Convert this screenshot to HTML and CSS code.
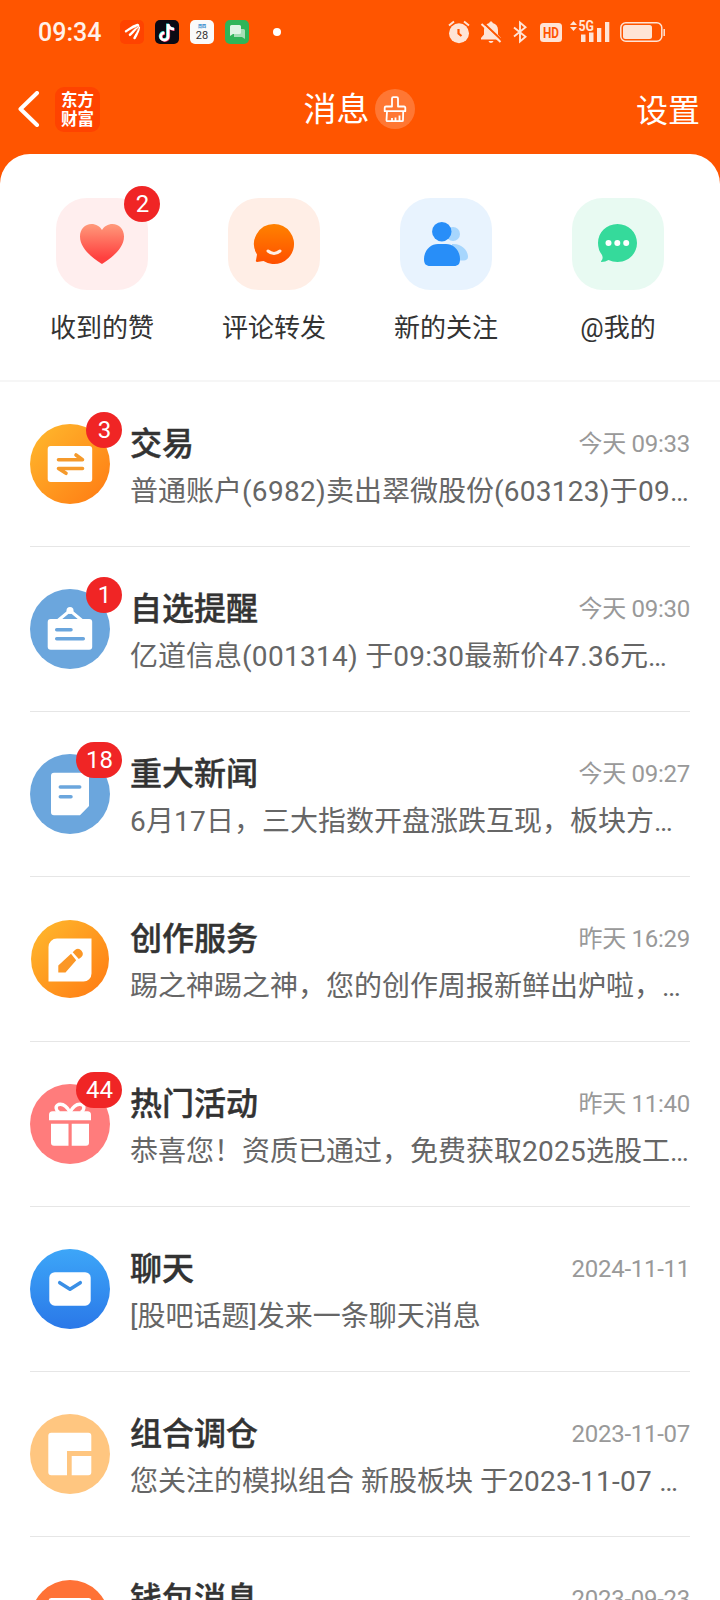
FILE: index.html
```html
<!DOCTYPE html>
<html lang="zh-CN">
<head>
<meta charset="utf-8">
<title>消息</title>
<link rel="stylesheet" href="styles.css">
</head>
<body>
<div class="screen">
  <div class="status">
    <span class="clock">09:34</span>
    <div class="status-apps">
      <svg class="app" viewBox="0 0 24 24"><rect width="24" height="24" rx="5" fill="#ff4300"/><g fill="none" stroke="#fff" stroke-linecap="round"><path d="M17.500 5C12 6.500 9 9.500 6 11.300" stroke-width="2.400"/><path d="M18 5.500C15 9 13 12.500 10 14.800" stroke-width="2.600"/><path d="M18.800 7.500C18.500 12 16 15 14.600 18" stroke-width="2.600"/></g><path d="M17.500 6.500C14 8.500 11.500 11.500 8 13M18.500 7.500c-1.500 4-3.500 6.500-5.700 9" stroke="#ff4300" stroke-width=".7" fill="none"/></svg>
      <svg class="app" viewBox="0 0 24 24"><rect width="24" height="24" rx="5" fill="#0b0a14"/><g fill="none" stroke-width="2.800"><path d="M12.500 3.500V16a3.700 3.700 0 1 1-3.700-3.700M12.500 4c.5 3 2.500 4.500 6 4.700" stroke="#2ee6e2"/><path d="M13.700 4.500V17a3.700 3.700 0 1 1-3.700-3.700M13.700 5c.5 3 2.500 4.500 6 4.700" stroke="#f6295a"/><path d="M13.100 4V16.500a3.700 3.700 0 1 1-3.700-3.700M13.100 4.500c.5 3 2.500 4.500 6 4.700" stroke="#fff"/></g></svg>
      <svg class="app" viewBox="0 0 24 24"><rect width="24" height="24" rx="5" fill="#fafafa"/><text class="cal-week" x="12" y="8.300" text-anchor="middle">周四</text><text class="cal-day" x="12" y="19" text-anchor="middle">28</text></svg>
      <svg class="app" viewBox="0 0 24 24"><rect width="24" height="24" rx="5" fill="#2fb558"/><path d="M9 9h9.500a1.500 1.500 0 0 1 1.500 1.500V19l-3-2H9z" fill="#a5dfb5"/><path d="M6.500 5h8A1.500 1.500 0 0 1 16 6.500v6a1.500 1.500 0 0 1-1.500 1.500H8l-3 2V6.500A1.500 1.500 0 0 1 6.500 5z" fill="#def4e3"/></svg>
    </div>
    <span class="dot"></span>
    <div class="status-sys">
      <svg class="s-alarm" viewBox="0 0 22 24"><circle cx="11" cy="13.200" r="10" fill="#ffe4d6"/><path d="M1 5.500L6 1.500M16 1.500l5 4" stroke="#ffe4d6" stroke-width="2"/><path d="M10.500 9v4.500l3 2.500" stroke="#ff5500" stroke-width="2.200" fill="none"/></svg>
      <svg class="s-bell" viewBox="0 0 22 24"><path d="M11 1.500c1 0 1.700.7 1.700 1.400 3.500.8 5.300 3.500 5.300 7v4.600L21 18v1.500H1V18l3-3.500V10c0-3.600 1.800-6.300 5.300-7.100 0-.7.700-1.400 1.700-1.400zM8.500 21h5c-.5 1.300-1.300 2-2.500 2s-2-.7-2.500-2z" fill="#ffe4d6"/><path d="M3.500 3L22 20.500" stroke="#ff5500" stroke-width="2.200"/><path d="M1.500 4L20.500 22" stroke="#ffe4d6" stroke-width="2"/></svg>
      <svg class="s-bt" viewBox="0 0 14 24"><path d="M1 7.500l11.500 9.300L7 21.500V2.500l5.500 4.800L1 16.500" stroke="#ffe4d6" stroke-width="1.900" fill="none"/></svg>
      <svg class="s-hd" viewBox="0 0 22 24"><rect y="3" width="22" height="19" rx="3.500" fill="#ffe4d6"/><text class="hd" x="11" y="17.700" text-anchor="middle" textLength="16" lengthAdjust="spacingAndGlyphs">HD</text></svg>
      <svg class="s-net" viewBox="0 0 40 24"><g fill="#ffe4d6"><path d="M0 5l3.500-4L7 5zM0 7h7l-3.500 4z"/><path d="M11 14.500h4.500V22H11zM19 12.500h4.500V22H19zM27 8h4.300v14H27zM35 2h4.300v20H35z"/></g><text class="net" x="8.500" y="11" textLength="15.500" lengthAdjust="spacingAndGlyphs">5G</text></svg>
      <svg class="s-bat" viewBox="0 0 45 24"><rect x=".8" y="2.800" width="41" height="18.400" rx="5" fill="none" stroke="#ffe4d6" stroke-width="1.500"/><rect x="3" y="5" width="29" height="14" rx="2.500" fill="#ffe4d6"/><path d="M44.200 9v7" stroke="#ffe4d6" stroke-width="1.500"/></svg>
    </div>
  </div>

  <header class="nav">
    <div class="nav-left">
      <svg class="back" viewBox="0 0 22 36"><path d="M19 2L2.500 18 19 34" fill="none" stroke="#fff" stroke-width="4" stroke-linecap="round" stroke-linejoin="round"/></svg>
      <div class="brand">东方<br>财富</div>
    </div>
    <div class="nav-title">
      <h1>消息</h1>
      <span class="clean"><svg viewBox="0 0 40 40"><g fill="none" stroke="#fff" stroke-width="1.800" stroke-linejoin="round"><path d="M17 17.500V9.500a1.300 1.300 0 0 1 1.300-1.300h3.400A1.300 1.300 0 0 1 23 9.500v8h6a1.300 1.300 0 0 1 1.300 1.300v3.400H9.700v-3.400a1.300 1.300 0 0 1 1.300-1.300z"/><path d="M12 22.500L11.500 31a1 1 0 0 0 1 1.200H27a1 1 0 0 0 1-1l.2-8.700"/><path d="M17 32v-3M20.500 32v-3.500M24.500 32v-5.500"/></g></svg></span>
    </div>
    <a class="nav-settings">设置</a>
  </header>

  <main class="sheet">
    <nav class="shortcuts">
      <div class="shortcut">
        <div class="tile pink"><svg viewBox="0 0 92 92"><defs><linearGradient id="heart" x2="0" y2="1"><stop stop-color="#ff9a7b"/><stop offset=".85" stop-color="#ff403f"/></linearGradient></defs><path d="M46 66C40 62 24 52 24 38.500 24 31 29 26 35.500 26c4.500 0 8.500 2.500 10.500 6 2-3.500 6-6 10.500-6C63 26 68 31 68 38.500 68 52 52 62 46 66z" fill="url(#heart)"/></svg><span class="badge">2</span></div>
        <span>收到的赞</span>
      </div>
      <div class="shortcut">
        <div class="tile peach"><svg viewBox="0 0 92 92"><defs><linearGradient id="smile" x2="0" y2="1"><stop stop-color="#ff8200"/><stop offset="1" stop-color="#ff4f00"/></linearGradient></defs><path d="M46 26a20 20 0 1 1-10.500 37L29 64c-1 0-1.500-1-1-1.800L29 56.500A20 20 0 0 1 46 26z" fill="url(#smile)"/><path d="M40 53q6 5 12 0" fill="none" stroke="#ffeee6" stroke-width="3" stroke-linecap="round"/></svg></div>
        <span>评论转发</span>
      </div>
      <div class="shortcut">
        <div class="tile sky"><svg viewBox="0 0 92 92"><g fill="#a7d6fd"><circle cx="53" cy="36" r="7"/><path d="M52 46c9-1 16 6 16 13 0 2-2 3.500-4 3.500H52z"/></g><g fill="#288ef8"><circle cx="41.800" cy="33.700" r="9.700"/><path d="M24 61c0-9 7-15 14-15h8c7 0 14 6 14 15 0 5-2 7-6 7H30c-4 0-6-2-6-7z"/></g></svg></div>
        <span>新的关注</span>
      </div>
      <div class="shortcut">
        <div class="tile mint"><svg viewBox="0 0 92 92"><path d="M45.500 26C56.500 26 65 34.500 65 45S56.500 64 45.500 64q-5 0-9-2-3 2-7 2-1 0 0-1.500 2-2 .5-5.500Q26 52 26 45c0-10.500 8.500-19 19.500-19z" fill="#35da9b"/><g fill="#fff"><circle cx="36.500" cy="45" r="3"/><circle cx="45.300" cy="45" r="3"/><circle cx="54.200" cy="45" r="3"/></g></svg></div>
        <span>@我的</span>
      </div>
    </nav>

    <section class="list">
      <article class="row">
        <div class="avatar"><svg viewBox="0 0 80 80"><defs><linearGradient id="amber" x2="1" y2="1"><stop offset=".1" stop-color="#ffb42b"/><stop offset=".9" stop-color="#ff8015"/></linearGradient></defs><circle cx="40" cy="40" r="40" fill="url(#amber)"/><rect x="17.700" y="22" width="44.500" height="36" rx="3" fill="#fff"/><path d="M28.500 35.700H52.500L46 31M52.500 44.500H28.500L36 49.300" fill="none" stroke="#f59a2c" stroke-width="3.600" stroke-linecap="round" stroke-linejoin="round"/></svg><span class="badge">3</span></div>
        <div class="text"><div class="line"><h2>交易</h2><time>今天 09:33</time></div><p>普通账户<span class="num">(6982)</span>卖出翠微股份<span class="num">(603123)</span>于<span class="num">09…</span></p></div>
      </article>
      <article class="row">
        <div class="avatar"><svg viewBox="0 0 80 80"><circle cx="40" cy="40" r="40" fill="#6ba6dd"/><rect x="17.700" y="30" width="44.500" height="30.700" rx="3" fill="#fff"/><path d="M28 31.500L40 21.500 52 31.500" fill="none" stroke="#fff" stroke-width="3"/><circle cx="40" cy="21.500" r="3.500" fill="#fff"/><path d="M26.700 40.800H41M26.700 49.700H53.300" stroke="#6ba6dd" stroke-width="3.500" stroke-linecap="round"/></svg><span class="badge">1</span></div>
        <div class="text"><div class="line"><h2>自选提醒</h2><time>今天 09:30</time></div><p>亿道信息<span class="num">(001314) </span>于<span class="num">09:30</span>最新价<span class="num">47.36</span>元…</p></div>
      </article>
      <article class="row">
        <div class="avatar"><svg viewBox="0 0 80 80"><circle cx="40" cy="40" r="40" fill="#6ba6dd"/><path d="M24 18.700H56a3 3 0 0 1 3 3V52L50 61.300H24a3 3 0 0 1-3-3V21.700a3 3 0 0 1 3-3z" fill="#fff"/><path d="M30.300 33H49.700M30.300 42.700H41" stroke="#6ba6dd" stroke-width="3.500" stroke-linecap="round"/></svg><span class="badge">18</span></div>
        <div class="text"><div class="line"><h2>重大新闻</h2><time>今天 09:27</time></div><p><span class="num">6</span>月<span class="num">17</span>日，三大指数开盘涨跌互现，板块方…</p></div>
      </article>
      <article class="row">
        <div class="avatar"><svg viewBox="0 0 80 80"><circle cx="40" cy="40" r="39" fill="url(#amber)"/><path d="M27 19.500H61.500V54.500a8 8 0 0 1-8 8H18.500V28a8.500 8.500 0 0 1 8.500-8.500z" fill="#fff"/><path d="M28.300 53.400V46.500L41 34.800 46.200 41.200 35.500 53.400zM42.700 33.300L45 31a4.800 4.800 0 0 1 6.200 7.300L48.800 40z" fill="#fb9726"/></svg></div>
        <div class="text"><div class="line"><h2>创作服务</h2><time>昨天 16:29</time></div><p>踢之神踢之神，您的创作周报新鲜出炉啦，…</p></div>
      </article>
      <article class="row">
        <div class="avatar"><svg viewBox="0 0 80 80"><circle cx="40" cy="40" r="40" fill="#ff7c7c"/><g fill="none" stroke="#fff" stroke-width="3.400"><path d="M40 28C36 21 32 19.500 28.500 20.500 25 22 25.500 26 29 28.500M40 28C44 21 48 19.500 51.500 20.500 55 22 54.500 26 51 28.500"/></g><g fill="#fff"><path d="M22.500 27.300h35a3.500 3.500 0 0 1 3.500 3.500v5.500H19v-5.500a3.500 3.500 0 0 1 3.500-3.500z"/><path d="M21 39.800H38.500V61.700H24a3 3 0 0 1-3-3zM41.700 39.800H59V58.700a3 3 0 0 1-3 3H41.700z"/></g></svg><span class="badge">44</span></div>
        <div class="text"><div class="line"><h2>热门活动</h2><time>昨天 11:40</time></div><p>恭喜您！资质已通过，免费获取<span class="num">2025</span>选股工…</p></div>
      </article>
      <article class="row">
        <div class="avatar"><svg viewBox="0 0 80 80"><defs><linearGradient id="azure" x2="0" y2="1"><stop stop-color="#3da6f8"/><stop offset="1" stop-color="#2a78e8"/></linearGradient></defs><circle cx="40" cy="40" r="40" fill="url(#azure)"/><rect x="19.300" y="23.200" width="41.400" height="33.500" rx="5.500" fill="#fff"/><path d="M29.700 33.700L40 40.200 50.300 33.700" fill="none" stroke="#3a8fe6" stroke-width="3.500" stroke-linecap="round" stroke-linejoin="round"/></svg></div>
        <div class="text"><div class="line"><h2>聊天</h2><time>2024-11-11</time></div><p>[股吧话题]发来一条聊天消息</p></div>
      </article>
      <article class="row">
        <div class="avatar"><svg viewBox="0 0 80 80"><circle cx="40" cy="40" r="40" fill="#ffc680"/><path d="M21.300 18.700h37a3 3 0 0 1 3 3V37H37V61.300H21.300a3 3 0 0 1-3-3V21.700a3 3 0 0 1 3-3zM41.700 42H61.300V58.300a3 3 0 0 1-3 3H41.700z" fill="#fff"/></svg></div>
        <div class="text"><div class="line"><h2>组合调仓</h2><time>2023-11-07</time></div><p>您关注的模拟组合 新股板块 于<span class="num">2023-11-07 …</span></p></div>
      </article>
      <article class="row">
        <div class="avatar"><svg viewBox="0 0 80 80"><circle cx="40" cy="40" r="39" fill="#ff7236"/><rect x="18.500" y="19" width="43" height="40" rx="3" fill="#fff"/></svg></div>
        <div class="text"><div class="line"><h2>钱包消息</h2><time>2023-09-23</time></div></div>
      </article>
    </section>
  </main>
</div>
</body>
</html>
```
FILE: styles.css
```css
* { box-sizing: border-box; margin: 0; padding: 0; }
body { background: #ff5500; font-family: Roboto, "Noto Sans CJK SC", sans-serif; color: #333; }
.screen { width: 720px; height: 1600px; overflow: hidden; display: flex; flex-direction: column; }
svg { display: block; flex: none; }

.status { height: 64px; flex: none; display: flex; align-items: center; padding: 0 55px 0 38px; }
.clock { width: 82px; font-size: 25px; font-weight: 500; line-height: 34px; padding-top: 2px; color: #fff1e9; }
.status-apps { display: flex; gap: 11px; }
.app { width: 24px; height: 24px; }
.cal-week { font-size: 4px; font-weight: 700; fill: #1683c9; }
.cal-day { font-size: 11px; fill: #333; }
.dot { width: 8px; height: 8px; border-radius: 50%; background: #fff; margin-left: 24px; }
.status-sys { margin-left: auto; display: flex; height: 24px; }
.status-sys svg { height: 24px; overflow: visible; }
.s-alarm { width: 22px; margin-right: 10px; }
.s-bell { width: 22px; margin-right: 11px; }
.s-bt { width: 14px; margin-right: 13px; }
.s-hd { width: 22px; margin-right: 8px; }
.s-net { width: 40px; margin-right: 10px; }
.s-bat { width: 45px; }
.hd { font-size: 14px; font-weight: 700; fill: #ff5500; }
.net { font-size: 14px; font-weight: 700; fill: #ffe4d6; }

.nav { height: 90px; flex: none; display: grid; grid-template-columns: 1fr auto 1fr; align-items: center; padding: 0 20px 0 18px; color: #fff; }
.nav-left { display: flex; align-items: center; gap: 15px; }
.back { width: 22px; height: 36px; }
.brand { width: 45px; height: 45px; padding-top: 3px; border-radius: 9px; background: #ff4300; text-align: center; font: 700 16.5px/19.5px "Noto Sans CJK SC", sans-serif; }
.nav-title { display: flex; align-items: center; gap: 5px; }
.nav-title h1 { font-size: 33px; line-height: 40px; font-weight: 400; padding-top: 2px; }
.clean { width: 40px; height: 40px; border-radius: 50%; background: #ff7733; }
.nav-settings { justify-self: end; font-size: 32px; line-height: 40px; padding-top: 3px; }

.sheet { flex: 1; min-height: 0; background: #fff; border-radius: 30px 30px 0 0; }
.shortcuts { height: 228px; display: grid; grid-template-columns: repeat(4, 172px); padding: 44px 16px 0; border-bottom: 2px solid #f6f6f6; }
.shortcut { display: flex; flex-direction: column; align-items: center; gap: 18px; font-size: 26px; line-height: 40px; }
.tile { position: relative; width: 92px; height: 92px; border-radius: 31px; }
.pink { background: #ffeeee; }
.peach { background: #ffeee6; }
.sky { background: #e8f3fe; }
.mint { background: #e8faf2; }
.badge { position: absolute; right: -12px; top: -12px; min-width: 36px; height: 36px; padding: 0 9px 0 10px; border-radius: 18px; background: #f02525; color: #fff; font-size: 24px; line-height: 37px; text-align: center; }

.row { height: 165px; margin: 0 30px; padding-top: 42px; display: flex; gap: 20px; border-bottom: 1px solid #e6e6e6; }
.avatar { position: relative; width: 80px; height: 80px; flex: none; }
.text { flex: 1; min-width: 0; }
.line { display: flex; justify-content: space-between; align-items: center; height: 40px; }
h2 { font-size: 32px; line-height: 40px; font-weight: 500; -webkit-text-stroke: .4px #333; }
time { font-size: 24px; line-height: 40px; letter-spacing: -.27px; color: #999; }
p { font-size: 28px; line-height: 40px; margin-top: 8px; color: #666; white-space: nowrap; }
.num { letter-spacing: .27px; }
```
